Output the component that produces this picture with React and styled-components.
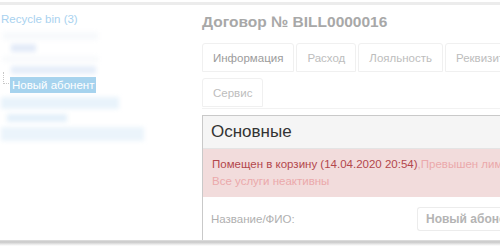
import React from "react";
import styled, { createGlobalStyle } from "styled-components";

const Global = createGlobalStyle`
  html, body { margin: 0; padding: 0; background: #fff; }
  body { font-family: "Liberation Sans", Arial, sans-serif; width: 500px; height: 250px; overflow: hidden; }
`;

const Page = styled.div`
  width: 500px;
  height: 250px;
  display: flex;
  flex-direction: column;
  overflow: hidden;
`;

const TopRule = styled.div`
  height: 3px;
  margin-top: 2px;
  background: #ececec;
  flex: none;
`;

const Main = styled.div`
  flex: 1;
  display: flex;
  min-height: 0;
  overflow: hidden;
`;

const Footer = styled.div`
  flex: none;
  height: 10px;
  background: linear-gradient(#e0e0e0 0, #c8c8c8 2px, #e6e6e6 4px, #fff 6px);
`;

const Sidebar = styled.aside`
  width: 190px;
  flex: none;
  padding: 7px 0 0 1px;
  display: flex;
  flex-direction: column;
`;

const BinLink = styled.div`
  font-size: 11.5px;
  line-height: 14px;
  color: #a9d2ef;
`;

const Blur = styled.div`
  filter: blur(2px);
  display: flex;
  flex-direction: column;
  gap: ${(p) => p.$gap || 6}px;
  padding: ${(p) => p.$pad || "0"};
`;

const Smudge = styled.div`
  height: ${(p) => p.$h}px;
  width: ${(p) => p.$w}px;
  margin-left: ${(p) => p.$x || 0}px;
  background: ${(p) => p.$c || "#e6f1fa"};
`;

const NodeRow = styled.div`
  display: flex;
  align-items: flex-end;
  margin: -2px 0 0 2px;
`;

const Connector = styled.div`
  width: 5px;
  height: 11px;
  border-left: 1px dotted #c8c8c8;
  border-bottom: 1px dotted #c8c8c8;
  margin-bottom: 9px;
`;

const Selected = styled.span`
  display: inline-block;
  margin-left: 1px;
  padding: 1px 2px;
  font-size: 11.5px;
  line-height: 14px;
  color: #fff;
  background: #a6d3ee;
`;

const Content = styled.section`
  flex: 1;
  padding: 7px 0 0 11px;
  display: flex;
  flex-direction: column;
  min-width: 0;
`;

const Title = styled.h1`
  margin: 0 0 11px;
  font-size: 15.5px;
  line-height: 20px;
  font-weight: bold;
  color: #a8a8a8;
  white-space: nowrap;
`;

const Tabs = styled.div`
  display: flex;
  flex-wrap: wrap;
  gap: 3px 2px;
  width: 400px;
  flex: none;
  padding-bottom: 1px;
  border-bottom: 1px solid #f2f2f2;
  margin-bottom: 6px;
`;

const TabBreak = styled.div`
  flex-basis: 100%;
  height: 0;
  margin-top: -3px;
`;

const Tab = styled.div`
  height: 29px;
  box-sizing: border-box;
  padding: 0 10px;
  display: flex;
  align-items: center;
  font-size: 11.5px;
  color: ${(p) => (p.$active ? "#9c9c9c" : "#bdbdbd")};
  border: 1px solid #f0f0f0;
  border-radius: 3px 3px 0 0;
  white-space: nowrap;
  flex: none;
`;

const Panel = styled.div`
  border: 1px solid #c9c9c9;
  border-right: none;
  border-bottom: none;
  flex: 1;
  display: flex;
  flex-direction: column;
  width: 330px;
`;

const PanelHead = styled.div`
  height: 33px;
  box-sizing: border-box;
  background: #f5f5f5;
  border-bottom: 1px solid #e4e4e4;
  padding: 0 8px;
  display: flex;
  align-items: center;
  font-size: 17px;
  color: #333;
`;

const Alert = styled.div`
  background: #f2dcdc;
  padding: 7px 9px;
  font-size: 11.5px;
  line-height: 17px;
  color: #eba9ab;
  white-space: nowrap;
`;

const Strong = styled.span`
  color: #b3474c;
`;

const FieldRow = styled.div`
  display: flex;
  align-items: center;
  padding: 10px 0 0 8px;
`;

const Label = styled.div`
  width: 206px;
  font-size: 11.5px;
  color: #b0b0b0;
`;

const Input = styled.div`
  height: 24px;
  box-sizing: border-box;
  flex: 1;
  border: 1px solid #ececec;
  border-right: none;
  border-radius: 3px 0 0 3px;
  padding: 0 8px;
  display: flex;
  align-items: center;
  font-size: 12px;
  font-weight: bold;
  color: #b4b4b4;
  white-space: nowrap;
  overflow: hidden;
`;

export default function App() {
  return (
    <>
      <Global />
      <Page>
        <TopRule />
        <Main>
          <Sidebar>
            <BinLink>Recycle bin (3)</BinLink>
            <Blur $gap={4} $pad="6px 0 0 2px">
              <Smudge $w={95} $h={8} $c="#f7f9fc" />
              <Smudge $w={25} $h={8} $x={8} $c="#e3ebf8" />
              <Smudge $w={95} $h={6} $c="#f8fafc" />
              <Smudge $w={85} $h={8} $x={8} $c="#e6eef9" />
            </Blur>
            <NodeRow>
              <Connector />
              <Selected>Новый абонент</Selected>
            </NodeRow>
            <Blur $gap={5} $pad="4px 0 0 0">
              <Smudge $w={118} $h={12} $c="#e9f3fb" />
              <Smudge $w={60} $h={8} $x={6} $c="#e4f0fa" />
              <Smudge $w={143} $h={14} $c="#ebf4fb" />
            </Blur>
          </Sidebar>
          <Content>
            <Title>Договор № BILL0000016</Title>
            <Tabs>
              <Tab $active>Информация</Tab>
              <Tab>Расход</Tab>
              <Tab>Лояльность</Tab>
              <Tab>Реквизиты</Tab>
              <TabBreak />
              <Tab>Сервис</Tab>
            </Tabs>
            <Panel>
              <PanelHead>Основные</PanelHead>
              <Alert>
                <Strong>Помещен в корзину (14.04.2020 20:54)</Strong>,Превышен лимит
                <br />
                Все услуги неактивны
              </Alert>
              <FieldRow>
                <Label>Название/ФИО:</Label>
                <Input>Новый абонент</Input>
              </FieldRow>
            </Panel>
          </Content>
        </Main>
        <Footer />
      </Page>
    </>
  );
}
